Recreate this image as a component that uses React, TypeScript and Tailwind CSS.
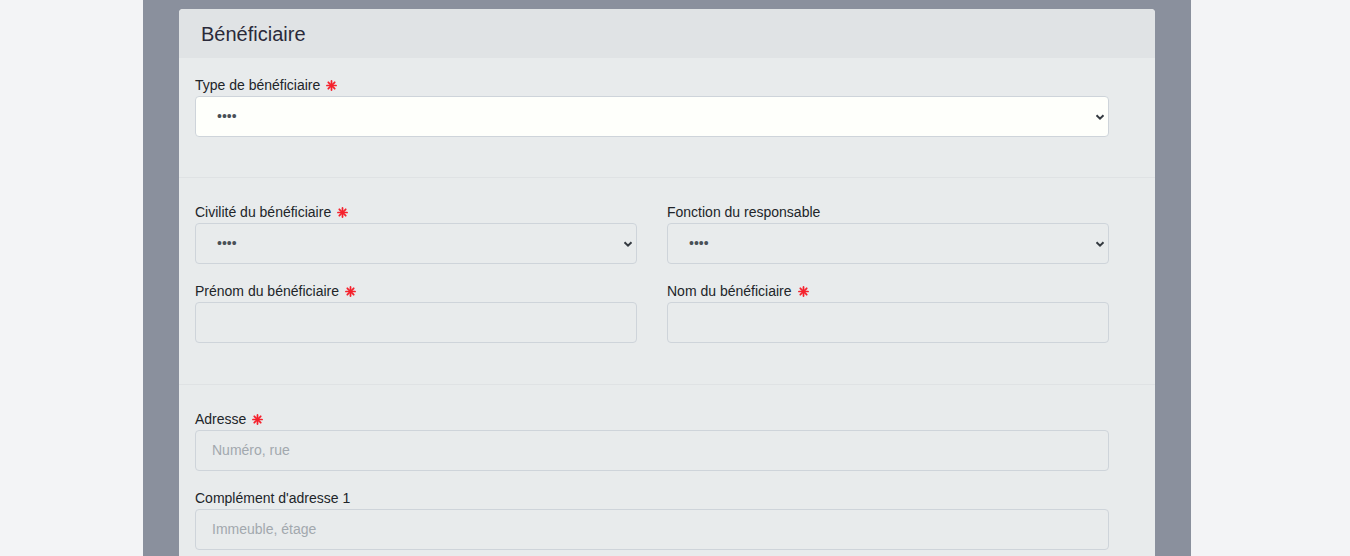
import React from 'react'

function Star() {
  return (
    <svg width="11" height="11" viewBox="0 0 12 12" className="ml-[6px] inline-block align-[-1px]">
      <g stroke="#f5222d" strokeWidth="1.9" strokeLinecap="round">
        <line x1="6" y1="1" x2="6" y2="11" />
        <line x1="1" y1="6" x2="11" y2="6" />
        <line x1="2.5" y1="2.5" x2="9.5" y2="9.5" />
        <line x1="9.5" y1="2.5" x2="2.5" y2="9.5" />
      </g>
    </svg>
  )
}

function Label({ text, required }: { text: string; required?: boolean }) {
  return (
    <div className="h-[22px] pt-px text-[14px] leading-[21px] text-[#212529] whitespace-nowrap">
      {text}
      {required && <Star />}
    </div>
  )
}

function Select({ white }: { white?: boolean }) {
  return (
    <div
      className={`h-[41px] flex items-center justify-between pl-[21px] pr-[3px] border border-[#ced4da] rounded-[4px] ${
        white ? 'bg-[#fefffb]' : 'bg-transparent'
      }`}
    >
      <span className="text-[14px] text-[#495057]">••••</span>
      <svg width="10" height="10" viewBox="0 0 10 10">
        <path d="M1.5 3.2L5 6.7l3.5-3.5" fill="none" stroke="#343a40" strokeWidth="2" />
      </svg>
    </div>
  )
}

function Input({ placeholder }: { placeholder?: string }) {
  return (
    <div className="h-[41px] flex items-center px-[16px] border border-[#ced4da] rounded-[4px]">
      <span className="text-[14px] text-[#a2a8ae]">{placeholder}</span>
    </div>
  )
}

export default function App() {
  return (
    <div className="h-[556px] overflow-hidden bg-[#f3f4f6] font-['Liberation_Sans',Arial,sans-serif]">
      <div className="ml-[143px] w-[1048px] h-full bg-[#8a909d] pt-[9px]">
        <div className="ml-[36px] w-[976px] rounded-t-[4px] overflow-hidden bg-[#e8ebec]">
          {/* en-tête */}
          <div className="h-[49px] bg-[#e0e3e5] pl-[22px] flex items-center">
            <h2 className="text-[20px] text-[#2b2a3a] leading-none">Bénéficiaire</h2>
          </div>

          {/* type */}
          <div className="px-[16px] pt-[16px] pb-[24px] border-b border-[#dfe2e4]">
            <div className="w-[914px] mb-[16px]">
              <Label text="Type de bénéficiaire" required />
              <Select white />
            </div>
          </div>

          {/* identité */}
          <div className="px-[16px] pt-[23px] pb-[25px] border-b border-[#dfe2e4]">
            <div className="w-[914px] grid grid-cols-2 gap-x-[30px] gap-y-[16px] mb-[16px]">
              <div>
                <Label text="Civilité du bénéficiaire" required />
                <Select />
              </div>
              <div>
                <Label text="Fonction du responsable" />
                <Select />
              </div>
              <div>
                <Label text="Prénom du bénéficiaire" required />
                <Input />
              </div>
              <div>
                <Label text="Nom du bénéficiaire" required />
                <Input />
              </div>
            </div>
          </div>

          {/* adresse */}
          <div className="px-[16px] pt-[23px] pb-[24px]">
            <div className="w-[914px] flex flex-col gap-[16px]">
              <div>
                <Label text="Adresse" required />
                <Input placeholder="Numéro, rue" />
              </div>
              <div>
                <Label text="Complément d'adresse 1" />
                <Input placeholder="Immeuble, étage" />
              </div>
            </div>
          </div>
        </div>
      </div>
    </div>
  )
}
